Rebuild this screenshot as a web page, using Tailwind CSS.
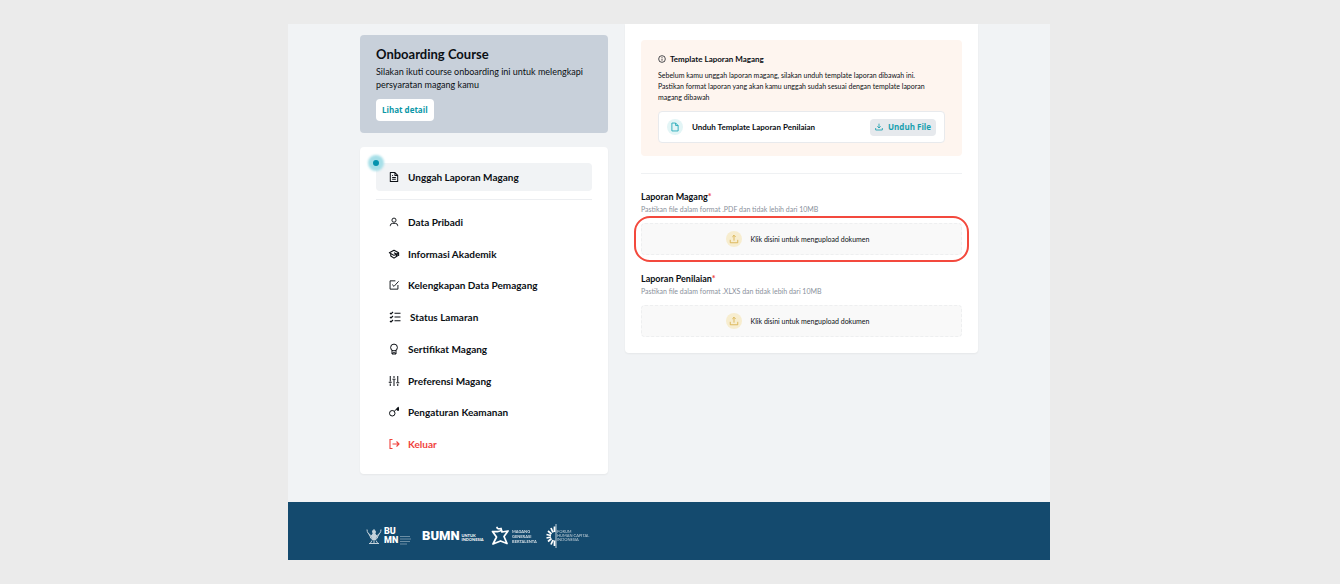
<!DOCTYPE html>
<html lang="id">
<head>
<meta charset="utf-8">
<meta name="viewport" content="width=device-width, initial-scale=1">
<title>Unggah Laporan Magang</title>
<script src="https://cdn.jsdelivr.net/npm/@tailwindcss/browser@4"></script>
</head>
<body class="min-h-screen bg-[#ebebeb] py-6 pr-0.5 font-['Lato',sans-serif] text-[#0b0f14]">
<div class="mx-auto w-full max-w-[762px] bg-[#f1f3f5]">
  <main class="flex items-start gap-[17px] px-[72px] pb-7">
    <div class="flex w-[248px] shrink-0 flex-col gap-3.5 pt-[11px]">
      <section class="rounded bg-[#c8d0da] px-4 pt-2.5 pb-3">
        <h1 class="text-[13px] leading-[18px] font-bold">Onboarding Course</h1>
        <p class="mt-0.5 text-[9px] leading-[13px]">Silakan ikuti course onboarding ini untuk melengkapi persyaratan magang kamu</p>
        <button type="button" class="mt-2 flex h-[22px] items-center rounded bg-white px-1.5 font-['Open_Sans',sans-serif] text-[8px] font-bold text-[#0a97a7]">Lihat detail</button>
      </section>

      <nav class="rounded bg-white px-4 pt-4 pb-3.5 text-[10px] leading-4 font-bold shadow-xs">
        <div class="relative">
          <a href="#unggah" class="flex h-7 items-center gap-2 rounded-sm bg-[#f1f3f5] px-3">
            <svg class="size-3" viewBox="-1 -1 26 26" fill="none" stroke="currentColor" stroke-width="2.2" stroke-linejoin="round"><path d="M4 2.500h10l6 6v13H4zM14 2.500v6h6M8 9h2M8 13h8M8 17h8"/></svg>
            Unggah Laporan Magang
          </a>
          <span class="absolute -top-2 -left-2 size-4 rounded-full bg-[#a6dfe8] blur-[1px]"></span>
          <span class="absolute -top-[3px] -left-[3px] size-1.5 rounded-full bg-[#0493ae]"></span>
        </div>
        <hr class="mt-2 mb-1.5 border-[#eceef1]">
        <ul>
          <li><a href="#data" class="flex h-8 items-center gap-2 px-3"><svg class="size-3" viewBox="-1 -1 26 26" fill="none" stroke="currentColor" stroke-width="2"><circle cx="12" cy="8" r="4.500"/><path d="M4 21v-1q0-5 5-5h6q5 0 5 5v1"/></svg>Data Pribadi</a></li>
          <li><a href="#akademik" class="flex h-[31px] items-center gap-2 px-3"><svg class="size-3" viewBox="-1 -1 26 26" fill="none" stroke="currentColor" stroke-width="2.400" stroke-linejoin="round"><path d="M12 4 2 9.500l10 5.500 10-5.500zM5 11.500v5l7 4.500 7-4.500v-5M12 9.500l5 2.500v6M22 9.500v7"/></svg>Informasi Akademik</a></li>
          <li><a href="#kelengkapan" class="flex h-8 items-center gap-2 px-3"><svg class="size-3" viewBox="-1 -1 26 26" fill="none" stroke="currentColor" stroke-width="2"><path d="M15 3H3.500v18h17v-9M8 11l4 4L22 4"/></svg>Kelengkapan Data Pemagang</a></li>
          <li><a href="#status" class="flex h-8 items-center gap-2 px-3"><svg class="h-3 w-3.5" viewBox="-2 0 28 24" fill="none" stroke="currentColor" stroke-width="2.400"><path d="m2 4 2 2 4-4M2 12l2 2 4-4M2 20l2 2 4-4M11 4.500h12M11 12h12M11 19.500h12"/></svg>Status Lamaran</a></li>
          <li><a href="#sertifikat" class="flex h-8 items-center gap-2 px-3"><svg class="size-3" viewBox="0 0 24 24" fill="none" stroke="currentColor" stroke-width="2"><circle cx="12" cy="9" r="6.800"/><path d="M8 14.500v7.500h8v-7.500M8 21l4-2 4 2"/></svg>Sertifikat Magang</a></li>
          <li><a href="#preferensi" class="flex h-[31px] items-center gap-2 px-3"><svg class="size-3" viewBox="0 0 24 24" fill="none" stroke="currentColor" stroke-width="2"><path d="M4.500 2v11M4.500 17v5M1.500 14.500h6M12 2v4M12 10v12M9 8.500h6M19.500 2v12M19.500 18v4M16.500 15.500h6"/></svg>Preferensi Magang</a></li>
          <li><a href="#keamanan" class="flex h-8 items-center gap-2 px-3"><svg class="size-3" viewBox="0 0 24 24" fill="none" stroke="currentColor" stroke-width="2"><circle cx="8.500" cy="14.500" r="5.500"/><path d="M12.500 10.500 21 2.500"/><path d="M16 6.500l2.500 3h3.500V3l-2-1z" fill="currentColor" stroke="none"/></svg>Pengaturan Keamanan</a></li>
          <li><a href="#keluar" class="flex h-8 items-center gap-2 px-3 text-[#f0423c]"><svg class="size-3" viewBox="0 0 24 24" fill="none" stroke="currentColor" stroke-width="2.200"><path d="M9 3H4v18h5M9 12h13M17 7l5 5-5 5"/></svg>Keluar</a></li>
        </ul>
      </nav>
    </div>

    <form class="min-w-0 flex-1 rounded-b bg-white px-4 pt-4 pb-4 shadow-xs">
      <section class="rounded-sm bg-[#fef5ef] px-[17px] pt-3 pb-[13px]">
        <h2 class="flex items-center gap-1 text-[8px] leading-[14px] font-bold"><svg class="size-2" viewBox="0 0 24 24" fill="none" stroke="currentColor" stroke-width="2.200"><circle cx="12" cy="12" r="10"/><path d="M12 11v6M12 6.500v2.500"/></svg>Template Laporan Magang</h2>
        <p class="mt-1 text-[7px] leading-[11px]">Sebelum kamu unggah laporan magang, silakan unduh template laporan dibawah ini.<br>Pastikan format laporan yang akan kamu unggah sudah sesuai dengan template laporan<br>magang dibawah</p>
        <div class="mt-2 flex h-8 items-center rounded border border-[#e8eaed] bg-white px-2">
          <span class="grid size-4 place-items-center rounded-full bg-[#e3f5f6] text-[#18a5b5]"><svg class="size-2.5" viewBox="0 0 24 24" fill="none" stroke="currentColor" stroke-width="2"><path d="M4.500 2.500h9l6 6v13h-15zM13.500 2.500v6h6"/></svg></span>
          <span class="ml-[9px] flex-1 text-[8px] font-bold">Unduh Template Laporan Penilaian</span>
          <button type="button" class="flex h-[17px] items-center gap-[5px] rounded-sm bg-[#e6e9ed] px-[5px] font-['Open_Sans',sans-serif] text-[8px] font-bold text-[#189faf]"><svg class="size-2" viewBox="0 0 24 24" fill="none" stroke="currentColor" stroke-width="2.500"><path d="M12 2v13M7 10l5 5 5-5M2 15v6h20v-6"/></svg>Unduh File</button>
        </div>
      </section>
      <hr class="mt-[17px] mb-[17px] border-[#eff1f3]">

      <h3 class="text-[9px] leading-3 font-bold">Laporan Magang<span class="text-[#f0423c]">*</span></h3>
      <p class="text-[7px] leading-3 text-[#8a919c]">Pastikan file dalam format .PDF dan tidak lebih dari 10MB</p>
      <div class="relative mt-2">
        <button type="button" class="flex h-8 w-full items-center justify-center gap-[9px] rounded border border-dashed border-[#eeeff0] bg-[#f9f9f9] pr-2 text-[7px]"><span class="grid size-4 place-items-center rounded-full bg-[#f7edcf] text-[#d9b048]"><svg class="size-2.5" viewBox="0 0 24 24" fill="none" stroke="currentColor" stroke-width="2"><path d="M12 16V3M8 7l4-4 4 4M3 14v7h18v-7"/></svg></span>Klik disini untuk mengupload dokumen</button>
        <span class="pointer-events-none absolute -inset-x-[7px] -inset-y-[7px] rounded-2xl border-2 border-[#f3493d]"></span>
      </div>

      <h3 class="mt-[18px] text-[9px] leading-3 font-bold">Laporan Penilaian<span class="text-[#f0423c]">*</span></h3>
      <p class="text-[7px] leading-3 text-[#8a919c]">Pastikan file dalam format .XLXS dan tidak lebih dari 10MB</p>
      <button type="button" class="mt-2 flex h-8 w-full items-center justify-center gap-[9px] rounded border border-dashed border-[#eeeff0] bg-[#f9f9f9] pr-2 text-[7px]"><span class="grid size-4 place-items-center rounded-full bg-[#f7edcf] text-[#d9b048]"><svg class="size-2.5" viewBox="0 0 24 24" fill="none" stroke="currentColor" stroke-width="2"><path d="M12 16V3M8 7l4-4 4 4M3 14v7h18v-7"/></svg></span>Klik disini untuk mengupload dokumen</button>
    </form>
  </main>

  <footer class="flex h-[58px] items-center gap-2 bg-[#144a6e] px-[78px] pt-2.5 text-white">
    <div class="flex w-12 items-center gap-0.5">
      <svg class="h-[17px] w-4 shrink-0 opacity-75" viewBox="0 0 32 34" fill="none" stroke="currentColor" stroke-width="2"><path d="M2 3q0 9 10 13M5 10q1 7 8 9M8 17q1 5 6 6M30 3q0 9-10 13M27 10q-1 7-8 9M24 17q-1 5-6 6"/><path d="M16 3l3 4-1 4 3 5-2 7H13l-2-7 3-5-1-5zM12 25l-3 5M16 24v8M20 25l3 5M6 31h20" fill="currentColor"/></svg>
      <div class="font-['Roboto',sans-serif] text-[9px] leading-[9px] font-black">BU<br>MN</div>
      <svg class="mt-2 h-2.5 w-[11px] shrink-0 opacity-50" viewBox="0 0 22 20" stroke="currentColor" stroke-width="1.500"><path d="M0 3h20M0 8h22M0 13h20M0 18h14"/></svg>
    </div>
    <div class="flex w-[61px] items-center gap-0.5">
      <span class="font-['Roboto',sans-serif] text-[13px] leading-4 font-black">BUMN</span>
      <span class="pt-1 text-[4px] leading-[4px] font-bold">UNTUK<br>INDONESIA</span>
    </div>
    <div class="flex w-[46px] items-center gap-[3px]">
      <svg class="h-5 w-[18px] shrink-0" viewBox="0 0 36 40" fill="none" stroke="currentColor" stroke-width="3.500" stroke-linejoin="round" stroke-linecap="round"><path d="M12 3q1 4 8 2l1 5M3 11h10q5 0 8-3l1 4 12-2-8 11 6 14-13-5-15 6 7-14z"/></svg>
      <span class="text-[4px] leading-[5px] font-bold opacity-80">MAGANG<br>GENERASI<br>BERTALENTA</span>
    </div>
    <div class="flex items-center">
      <svg class="h-6 w-3 shrink-0" viewBox="0 0 24 48" fill="none" stroke="currentColor"><path d="M22 0v48" stroke-width="1.500"/><path d="M19 5v11M12 8l4 9M6 14l7 6M3 21l9 2M3 28l9-2M6 35l7-6M12 41l4-9M19 44V33" stroke-width="3.500"/></svg>
      <span class="text-[4px] leading-[4px] opacity-70">FORUM<br>HUMAN CAPITAL<br>INDONESIA</span>
    </div>
  </footer>
</div>
</body>
</html>
